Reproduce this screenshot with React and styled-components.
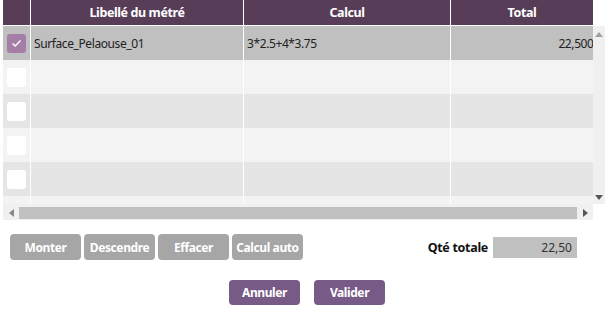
import React from "react";
import styled, { createGlobalStyle } from "styled-components";

const Global = createGlobalStyle`
  html, body { margin: 0; padding: 0; background: #ffffff; }
  body { font-family: "Noto Sans", "Open Sans", sans-serif; color: #222; }
  * { box-sizing: border-box; }
`;

const Page = styled.div`
  width: 605px;
  height: 309px;
  overflow: hidden;
  display: flex;
  flex-direction: column;
`;

const GridFrame = styled.div`
  margin-left: 3px;
  width: 602px;
  display: grid;
  grid-template-columns: 590px 12px;
  grid-template-rows: 204px 16px;
`;

const Viewport = styled.div`
  overflow: hidden;
  display: flex;
  flex-direction: column;
`;

const Cols = "28px 213px 207px 150px";

const HeaderRow = styled.div`
  display: grid;
  grid-template-columns: ${Cols};
  height: 26px;
  flex-shrink: 0;
  background: #573d58;
  border-bottom: 1px solid #ffffff;
`;

const HeadCell = styled.div`
  color: #ffffff;
  font-weight: 700;
  font-size: 12.5px;
  letter-spacing: -0.4px;
  display: flex;
  align-items: center;
  justify-content: center;
  padding-bottom: 1px;
  border-right: 1px solid #ffffff;
  &:last-child { border-right: none; padding-right: 8px; }
`;

const Row = styled.div`
  display: grid;
  grid-template-columns: ${Cols};
  height: 34px;
  flex-shrink: 0;
  background: ${(p) => p.$bg};
`;

const Cell = styled.div`
  display: flex;
  align-items: center;
  justify-content: ${(p) => (p.$right ? "flex-end" : "flex-start")};
  padding: ${(p) => (p.$right ? "0 1px 0 0" : "0 0 0 3px")};
  font-size: 12px;
  letter-spacing: -0.4px;
  color: #222;
  white-space: nowrap;
  overflow: hidden;
  border-right: 1px solid #ffffff;
  &:last-child { border-right: none; }
`;

const CheckCell = styled(Cell)`
  justify-content: flex-start;
  padding-left: 4px;
`;

const Box = styled.div`
  width: 19px;
  height: 19px;
  border-radius: 3px;
  background: ${(p) => (p.$checked ? "#a47ea7" : "#ffffff")};
  display: flex;
  align-items: center;
  justify-content: center;
`;

const VScroll = styled.div`
  margin-top: 26px;
  background: #f0f0f0;
  display: flex;
  flex-direction: column;
  justify-content: space-between;
  align-items: center;
  padding: 6px 0 4px;
`;

const HScroll = styled.div`
  background: #f0f0f0;
  display: flex;
  align-items: center;
  padding: 2px 0 1px;
`;

const Arrow = styled.div`
  width: 16px;
  height: 100%;
  display: flex;
  align-items: center;
  justify-content: center;
`;

const Thumb = styled.div`
  flex: 1;
  height: 12px;
  background: #c0c0c0;
`;

const Corner = styled.div`
  background: #ffffff;
`;

const Toolbar = styled.div`
  display: flex;
  align-items: center;
  justify-content: space-between;
  margin-top: 14px;
  padding: 0 28px 0 10px;
`;

const ButtonGroup = styled.div`
  display: flex;
  gap: 3px;
`;

const GrayButton = styled.button`
  height: 26px;
  min-width: 71px;
  padding: 0 4px;
  border: none;
  border-radius: 4px;
  background: #a6a6a6;
  color: #ffffff;
  font-family: "Noto Sans", sans-serif;
  font-weight: 700;
  font-size: 12px;
  letter-spacing: -0.4px;
`;

const Total = styled.div`
  display: flex;
  align-items: center;
  gap: 5px;
`;

const TotalLabel = styled.span`
  font-weight: 700;
  font-size: 12.5px;
  letter-spacing: -0.3px;
  color: #111;
`;

const TotalBox = styled.div`
  width: 84px;
  height: 21px;
  background: #c0c0c0;
  font-size: 12px;
  color: #333;
  display: flex;
  align-items: center;
  justify-content: flex-end;
  padding-right: 5px;
`;

const Footer = styled.div`
  display: flex;
  justify-content: center;
  gap: 14px;
  margin-top: 20px;
  padding-left: 9px;
`;

const PurpleButton = styled.button`
  width: 71px;
  height: 25px;
  border: none;
  border-radius: 4px;
  background: #775a86;
  color: #ffffff;
  font-family: "Noto Sans", sans-serif;
  font-weight: 700;
  font-size: 12px;
  letter-spacing: -0.4px;
`;

const Tri = ({ dir, color = "#555" }) => {
  const pts = {
    up: "0,5 4,0 8,5",
    down: "0,0 8,0 4,5",
    left: "5,0 5,8 0,4",
    right: "0,0 0,8 5,4",
  }[dir];
  const vertical = dir === "up" || dir === "down";
  return (
    <svg width={vertical ? 8 : 5} height={vertical ? 5 : 8} viewBox={vertical ? "0 0 8 5" : "0 0 5 8"}>
      <polygon points={pts} fill={color} />
    </svg>
  );
};

const rows = [
  { checked: true, label: "Surface_Pelaouse_01", calc: "3*2.5+4*3.75", total: "22,5000", bg: "#c0c0c0" },
  { bg: "#f3f3f3" },
  { bg: "#e5e5e5" },
  { bg: "#f3f3f3" },
  { bg: "#e5e5e5" },
  { bg: "#f3f3f3" },
];

export default function App() {
  return (
    <Page>
      <Global />
      <GridFrame>
        <Viewport>
          <HeaderRow>
            <HeadCell />
            <HeadCell>Libellé du métré</HeadCell>
            <HeadCell>Calcul</HeadCell>
            <HeadCell>Total</HeadCell>
          </HeaderRow>
          {rows.map((r, i) => (
            <Row key={i} $bg={r.bg}>
              <CheckCell>
                <Box $checked={r.checked}>
                  {r.checked && (
                    <svg width="11" height="9" viewBox="0 0 11 9">
                      <path d="M1.5 4.5 L4.2 7 L9.5 1.5" stroke="#fff" strokeWidth="1.4" fill="none" />
                    </svg>
                  )}
                </Box>
              </CheckCell>
              <Cell>{r.label}</Cell>
              <Cell>{r.calc}</Cell>
              <Cell $right>{r.total}</Cell>
            </Row>
          ))}
        </Viewport>
        <VScroll>
          <Tri dir="up" color="#a0a0a0" />
          <Tri dir="down" color="#555" />
        </VScroll>
        <HScroll>
          <Arrow><Tri dir="left" color="#888" /></Arrow>
          <Thumb />
          <Arrow><Tri dir="right" color="#555" /></Arrow>
        </HScroll>
        <Corner />
      </GridFrame>
      <Toolbar>
        <ButtonGroup>
          <GrayButton>Monter</GrayButton>
          <GrayButton>Descendre</GrayButton>
          <GrayButton>Effacer</GrayButton>
          <GrayButton>Calcul auto</GrayButton>
        </ButtonGroup>
        <Total>
          <TotalLabel>Qté totale</TotalLabel>
          <TotalBox>22,50</TotalBox>
        </Total>
      </Toolbar>
      <Footer>
        <PurpleButton>Annuler</PurpleButton>
        <PurpleButton>Valider</PurpleButton>
      </Footer>
    </Page>
  );
}
